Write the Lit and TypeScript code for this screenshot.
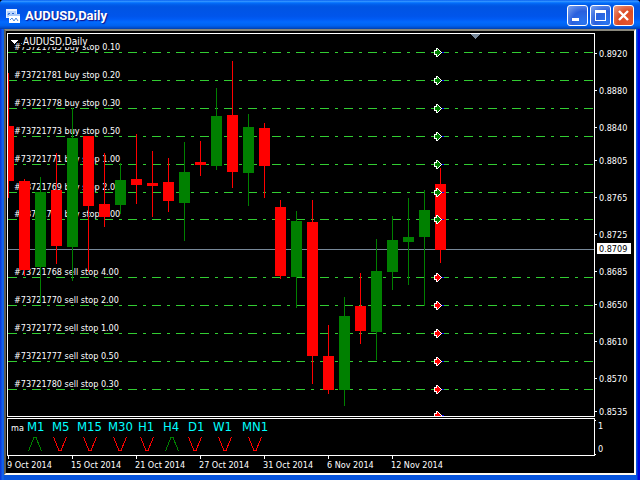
import { LitElement, html, css, svg } from "lit";
import { customElement } from "lit/decorators.js";

type Candle = { x: number; high: number; top: number; bottom: number; low: number; up: boolean };
const c = (x: number, high: number, top: number, bottom: number, low: number, up = false): Candle => ({
  x, high, top, bottom, low, up,
});

const candles: Candle[] = [
  c(8, 73, 126, 181, 198), c(24, 179, 181, 270, 276), c(40, 177, 192, 267, 303, true),
  c(56, 153, 190, 246, 264), c(72, 108, 138, 247, 281, true), c(88, 136, 136, 206, 272),
  c(104, 153, 204, 217, 227), c(120, 163, 180, 205, 214, true), c(136, 134, 179, 185, 204),
  c(152, 151, 183, 186, 217), c(168, 158, 182, 201, 212), c(184, 142, 172, 203, 241, true),
  c(200, 141, 162, 165, 176), c(216, 88, 116, 166, 170, true), c(232, 61, 115, 172, 188),
  c(248, 114, 127, 173, 206, true), c(264, 123, 128, 166, 198), c(280, 200, 207, 276, 279),
  c(296, 211, 221, 277, 308, true), c(312, 200, 222, 356, 384), c(328, 325, 356, 390, 394),
  c(344, 297, 316, 390, 406, true), c(360, 273, 306, 331, 344), c(376, 239, 271, 332, 360, true),
  c(392, 216, 240, 272, 290, true), c(408, 198, 237, 242, 285, true), c(424, 190, 210, 237, 306, true),
  c(440, 168, 184, 250, 263),
];

const orders = [
  { y: 52, text: "#73721785 buy stop 0.10", buy: true },
  { y: 80, text: "#73721781 buy stop 0.20", buy: true },
  { y: 108, text: "#73721778 buy stop 0.30", buy: true },
  { y: 136, text: "#73721773 buy stop 0.50", buy: true },
  { y: 164, text: "#73721771 buy stop 1.00", buy: true },
  { y: 192, text: "#73721769 buy stop 2.00", buy: true },
  { y: 219, text: "#73721767 buy stop 4.00", buy: true },
  { y: 277, text: "#73721768 sell stop 4.00", buy: false },
  { y: 305, text: "#73721770 sell stop 2.00", buy: false },
  { y: 333, text: "#73721772 sell stop 1.00", buy: false },
  { y: 361, text: "#73721777 sell stop 0.50", buy: false },
  { y: 389, text: "#73721780 sell stop 0.30", buy: false },
];

const prices: [string, number][] = [
  ["0.8920", 53], ["0.8880", 90], ["0.8840", 127], ["0.8805", 160], ["0.8765", 197], ["0.8725", 234],
  ["0.8685", 271], ["0.8650", 304], ["0.8610", 341], ["0.8570", 378], ["0.8535", 411],
];

const frames: [string, number, number, boolean][] = [
  ["M1", 27, 35, true], ["M5", 52, 60, false], ["M15", 77, 90, false], ["M30", 108, 120, false],
  ["H1", 138, 147, false], ["H4", 163, 172, true], ["D1", 188, 195, false], ["W1", 213, 225, false],
  ["MN1", 242, 255, false],
];

const dates: [string, number][] = [
  ["9 Oct 2014", 8], ["15 Oct 2014", 72], ["21 Oct 2014", 136], ["27 Oct 2014", 200],
  ["31 Oct 2014", 264], ["6 Nov 2014", 328], ["12 Nov 2014", 392],
];

const marker = (y: number, buy: boolean) => svg`
  <g transform="translate(434 ${y})">
    <rect x="8" y="0" width="2" height="1" fill="#0000ff"></rect>
    <path class=${buy ? "mark buy" : "mark sell"} d="M.5 -1.5h2v-2h1l4 4l-4 4h-1v-2h-2z"></path>
  </g>`;

@customElement("app-root")
export class AppRoot extends LitElement {
  static styles = css`
    :host {
      display: flex;
      flex-direction: column;
      box-sizing: border-box;
      min-height: 100vh;
      background: #000;
      font-family: "DejaVu Sans Condensed", "DejaVu Sans", sans-serif;
      font-size: 9px;
      color: #fff;
    }
    .window {
      flex: 1;
      display: flex;
      flex-direction: column;
      border-radius: 4px 4px 0 0;
      overflow: hidden;
      background: linear-gradient(90deg, #0831d9, #166aee 3px, #0855dd 4px, #0855dd calc(100% - 3px), #0008e0 calc(100% - 2px));
    }
    .titlebar {
      height: 29px;
      display: flex;
      align-items: center;
      gap: 2px;
      padding: 2px 6px 0;
      box-sizing: border-box;
      background: linear-gradient(#0058ee 0, #3593ff 4%, #288eff 6%, #127dff 8%, #036ffc 10%, #0262ee 14%,
        #0057e5 20%, #0054e3 24%, #0055eb 56%, #005bf5 66%, #026afe 76%, #0062ef 88%, #0052d6 94%, #0040ab 100%);
    }
    .logo { width: 14px; height: 14px; }
    .title {
      flex: 1;
      margin: 0 0 0 3px;
      font: bold 13px/18px Roboto, "Open Sans", sans-serif;
      text-shadow: 1px 1px 1px #0f1089;
    }
    .btn {
      width: 21px;
      height: 21px;
      padding: 0;
      border: 1px solid #fff;
      border-radius: 3px;
      background: radial-gradient(circle at 80% 85%, #2a76f0, #2a60dd 50%, #7ea4ef);
    }
    .btn.close { background: radial-gradient(circle at 80% 85%, #e5552c, #dc4b24 50%, #eba08a); }
    .btn svg { display: block; width: 19px; height: 19px; }
    .client {
      flex: 1;
      display: grid;
      grid-template-columns: minmax(0, 1fr) 39px;
      grid-template-rows: minmax(384px, 1fr) 38px 16px;
      row-gap: 1px;
      margin: 0 4px 5px;
      padding: 2px 0 0 1px;
      background: #000;
      border: 2px solid;
      border-color: #8a887c #fffbf0 #fffbf0 #5d5c54;
    }
    svg { display: block; width: 100%; height: 100%; overflow: hidden; }
    .panel { border: 1px solid #fff; overflow: hidden; min-width: 0; }
    .times { grid-column: 1 / 3; margin-top: -1px; height: 17px; }
    text { fill: #fff; white-space: pre; }
    text.tf { fill: #00ffff; font-size: 13px; }
    text.symbol { font-size: 10px; }
    text.dark { fill: #000; }
    .level { stroke: #32cd32; stroke-dasharray: 9 6 3 6; }
    .bid { stroke: #778899; }
    .up { fill: #008000; }
    .down { fill: #ff0000; }
    .mark { stroke: #fff; }
    .mark.buy { fill: #008000; }
    .mark.sell { fill: #ff0000; }
    .tick { fill: #fff; }
    .vee { fill: none; stroke: #ff0000; }
    .vee.rise { stroke: #008000; }
    g, rect, line, path { shape-rendering: crispEdges; }
    .smooth path { shape-rendering: auto; }
  `;

  private plot() {
    return html`<svg role="img" aria-label="AUDUSD daily chart">
      <g transform="translate(-8 -34)">
        <line class="bid" x1="8" x2="200%" y1="249.5" y2="249.5"></line>
        ${orders.map((o) => svg`
          <line class="level" x1="8" x2="200%" y1=${o.y + 0.5} y2=${o.y + 0.5}></line>
          <text x="14" y=${o.y - 2}>${o.text}</text>`)}
        ${candles.map((k) => svg`
          <g class=${k.up ? "up" : "down"}>
            <rect x=${k.x} y=${k.high} width="1" height=${k.low - k.high}></rect>
            <rect x=${k.x - 5} y=${k.top} width="11" height=${k.bottom - k.top}></rect>
          </g>`)}
        ${orders.map((o) => marker(o.y, o.buy))}
        ${marker(415, false)}
        <rect x="22" y="34" width="67" height="13" fill="#000"></rect>
        <path d="M11 40h7l-3 4h-1z" fill="#fff"></path>
        <text class="symbol" x="23" y="45">AUDUSD,Daily</text>
        <path d="M471 34h9l-4 5h-1z" fill="#778899"></path>
      </g>
    </svg>`;
  }

  render() {
    return html`<main class="window">
      <header class="titlebar">
        <svg class="logo smooth" viewBox="0 0 14 14" aria-hidden="true">
          <rect x="0" y="0" width="11" height="9" fill="#e8f2ff"></rect>
          <rect x="1" y="2" width="9" height="6" fill="#b8d4ff"></rect>
          <path d="M2 6l1-2 2 2 2-2 1 1" fill="none" stroke="#1c5fd0"></path>
          <rect x="3" y="5" width="11" height="9" fill="#fff"></rect>
          <rect x="3" y="5" width="11" height="2" fill="#a8c8f8"></rect>
          <path d="M4 11l2-2 2 3 2-3 2 3" fill="none" stroke="#4a88e0"></path>
        </svg>
        <h1 class="title">AUDUSD,Daily</h1>
        <button class="btn" aria-label="Minimize">
          <svg viewBox="0 0 19 19"><rect x="4" y="12" width="7" height="3" fill="#fff"></rect></svg>
        </button>
        <button class="btn" aria-label="Maximize">
          <svg viewBox="0 0 19 19">
            <rect x="4.5" y="4.5" width="10" height="10" fill="none" stroke="#fff"></rect>
            <rect x="4" y="4" width="11" height="3" fill="#fff"></rect>
          </svg>
        </button>
        <button class="btn close" aria-label="Close">
          <svg class="smooth" viewBox="0 0 19 19"><path d="M5 5l9 9M14 5l-9 9" stroke="#fff" stroke-width="2.4"></path></svg>
        </button>
      </header>
      <section class="client">
        <div class="panel">${this.plot()}</div>
        <svg role="img" aria-label="Price scale">
          <g transform="translate(-595 -33)">
            ${prices.map(([label, y]) => svg`
              <rect class="tick" x="595" y=${y} width="2" height="1"></rect>
              <text x="599" y=${y + 4}>${label}</text>`)}
            <rect x="597" y="243" width="34" height="11" fill="#fff"></rect>
            <text class="dark" x="599" y="252">0.8709</text>
          </g>
        </svg>
        <div class="panel">
          <svg role="img" aria-label="Moving average by timeframe">
            <g transform="translate(-8 -419)">
              <text x="11" y="431">ma</text>
              ${frames.map(([label, x, mid, rise]) => svg`
                <text class="tf" x=${x} y="431">${label}</text>
                <path class=${rise ? "vee rise" : "vee"} transform="translate(${mid} 437)"
                  d=${rise ? "M-6.5 14L-1 .5h2L6.5 14" : "M-6.5 0L-1 13.5h2L6.5 0"}></path>`)}
            </g>
          </svg>
        </div>
        <svg role="img" aria-label="Indicator scale">
          <rect class="tick" x="0" y="2" width="1" height="1"></rect>
          <rect class="tick" x="0" y="36" width="1" height="1"></rect>
          <text x="3" y="11">1</text>
          <text x="3" y="34">0</text>
        </svg>
        <svg class="times" role="img" aria-label="Time scale">
          <g transform="translate(-7 -456)">
            ${dates.map(([label, x]) => svg`
              <rect class="tick" x=${x} y="456" width="1" height="3"></rect>
              <text x=${x - 1} y="468">${label}</text>`)}
          </g>
        </svg>
      </section>
    </main>`;
  }
}
